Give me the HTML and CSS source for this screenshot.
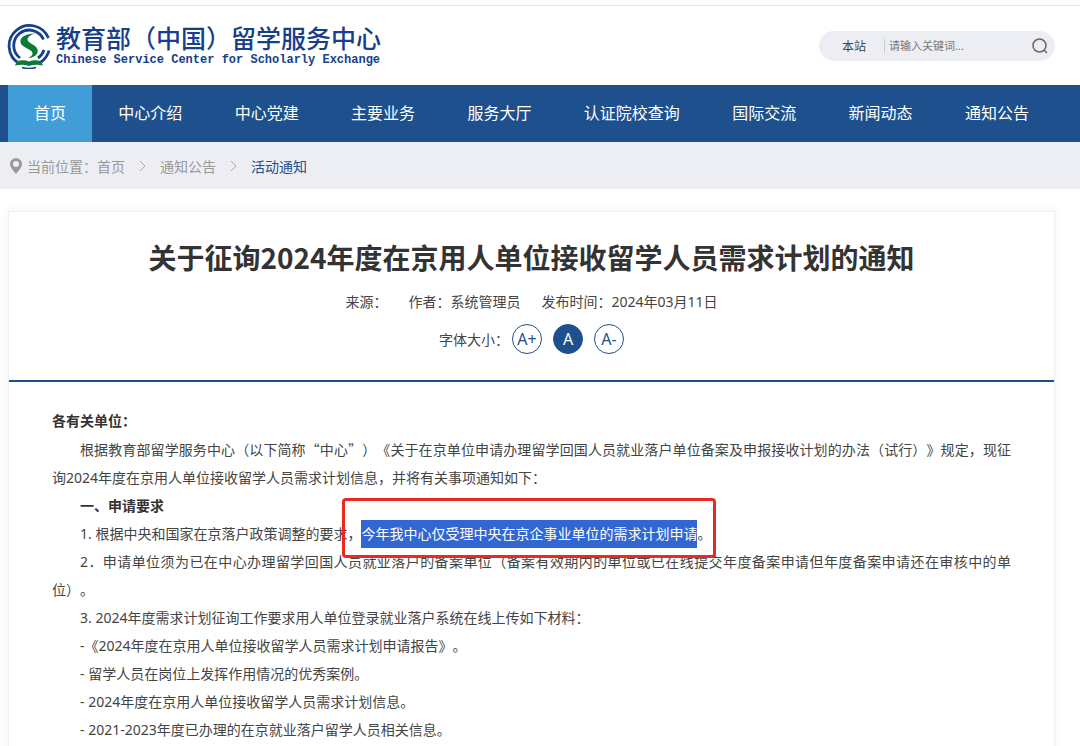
FILE: index.html
```html
<!DOCTYPE html>
<html lang="zh-CN">
<head>
    <meta charset="UTF-8">
    <meta name="viewport" content="width=device-width, initial-scale=1.0">
    <title>教育部（中国）留学服务中心</title>
    <link rel="stylesheet" href="styles.css">
</head>
<body>
    <header class="header">
        <a class="logo" href="#">
            <svg class="logo-mark" viewBox="0 0 44 46" aria-hidden="true">
                <g fill="none" stroke="#17408b">
                    <path d="M41.500 15A20.500 20.500 0 1 0 12 40.500" stroke-width="2.800"/>
                    <path d="M36.500 16.500A15.500 15.500 0 1 0 13 35" stroke-width="2.800"/>
                    <path d="M42 27.500A20.500 20.500 0 0 1 34 39" stroke-width="2.800"/>
                    <path d="M37 27A15.500 15.500 0 0 1 31 35" stroke-width="2.800"/>
                    <path d="M15 44.500q7 2 14 0" stroke-width="1.500"/>
                </g>
                <path fill="#0b7a35" d="M28 10.500C19 10.500 12.500 14 13.500 19.500C14.500 24.500 25 26 25.500 30C25.800 32 24 33.500 21.500 35C28 34.500 31.500 31 30.500 26.500C29.500 21.500 20.500 20.500 20.500 16.500C20.500 14 24 11.500 28 10.500Z"/>
                <path fill="#0b7a35" d="M10 38Q17 36.500 22 38.500Q27 36.500 34 38L36 42.500Q28 41 22 43Q16 41 8 42.500Z"/>
            </svg>
            <span class="logo-text">
                <span class="logo-cn">教育部（中国）留学服务中心</span>
                <span class="logo-en">Chinese Service Center for Scholarly Exchange</span>
            </span>
        </a>
        <form class="search">
            <button class="search-scope" type="button">本站</button>
            <input class="search-input" type="text" placeholder="请输入关键词..." aria-label="请输入关键词">
            <button class="search-btn" type="submit" aria-label="搜索">
                <svg viewBox="0 0 16 16" fill="none" stroke="#666" stroke-width="1.500">
                    <circle cx="7.500" cy="7.500" r="6.500"/>
                    <path d="M12 12l3 3"/>
                </svg>
            </button>
        </form>
    </header>

    <nav class="nav">
        <ul class="nav-list">
            <li><a class="active" href="#">首页</a></li>
            <li><a href="#">中心介绍</a></li>
            <li><a href="#">中心党建</a></li>
            <li><a href="#">主要业务</a></li>
            <li><a href="#">服务大厅</a></li>
            <li><a href="#">认证院校查询</a></li>
            <li><a href="#">国际交流</a></li>
            <li><a href="#">新闻动态</a></li>
            <li><a href="#">通知公告</a></li>
        </ul>
    </nav>

    <div class="crumbs">
        <svg class="pin" viewBox="0 0 12 16" aria-hidden="true">
            <path fill="#999" fill-rule="evenodd" d="M6 0a6 6 0 0 1 6 6c0 3.500-3 6-6 10C3 12 0 9.500 0 6a6 6 0 0 1 6-6zm0 3a3 3 0 1 0 0 6 3 3 0 0 0 0-6z"/>
        </svg>
        <span>当前位置：</span>
        <a href="#">首页</a>
        <svg class="arrow" viewBox="0 0 7 10" fill="none" stroke="#aaa"><path d="M1 0l5 5-5 5"/></svg>
        <a href="#">通知公告</a>
        <svg class="arrow" viewBox="0 0 7 10" fill="none" stroke="#aaa"><path d="M1 0l5 5-5 5"/></svg>
        <a class="current" href="#">活动通知</a>
    </div>

    <main class="article">
        <div class="article-head">
            <h1>关于征询2024年度在京用人单位接收留学人员需求计划的通知</h1>
            <div class="meta">
                <span>来源：</span>
                <span>作者：系统管理员</span>
                <span>发布时间：2024年03月11日</span>
            </div>
            <div class="font-size">
                <span>字体大小：</span>
                <button type="button">A+</button>
                <button class="on" type="button">A</button>
                <button type="button">A-</button>
            </div>
        </div>
        <div class="article-body">
            <p class="flush"><strong>各有关单位：</strong></p>
            <p>根据教育部留学服务中心（以下简称<span class="quote">“中心”</span>）《关于在京单位申请办理留学回国人员就业落户单位备案及申报接收计划的办法（试行）》规定，现征询2024年度在京用人单位接收留学人员需求计划信息，并将有关事项通知如下：</p>
            <p><strong>一、申请要求</strong></p>
            <p>1. 根据中央和国家在京落户政策调整的要求，<mark>今年我中心仅受理中央在京企事业单位的需求计划申请</mark>。</p>
            <p>2．申请单位须为已在中心办理留学回国人员就业落户的备案单位（备案有效期内的单位或已在线提交年度备案申请但年度备案申请还在审核中的单位）。</p>
            <p>3. 2024年度需求计划征询工作要求用人单位登录就业落户系统在线上传如下材料：</p>
            <p>-《2024年度在京用人单位接收留学人员需求计划申请报告》。</p>
            <p>- 留学人员在岗位上发挥作用情况的优秀案例。</p>
            <p>- 2024年度在京用人单位接收留学人员需求计划信息。</p>
            <p>- 2021-2023年度已办理的在京就业落户留学人员相关信息。</p>
        </div>
    </main>
</body>
</html>
```
FILE: styles.css
```css
* {
    box-sizing: border-box;
}
body {
    margin: 0;
    padding-top: 5px;
    font-family: "Noto Sans", "Noto Sans CJK SC", sans-serif;
    font-size: 14px;
    color: #444;
    background-color: #fff;
    text-spacing-trim: space-all;
}
a {
    color: inherit;
    text-decoration: none;
}
button, input {
    font-family: inherit;
    border: 0;
    padding: 0;
    background: none;
}
button {
    cursor: pointer;
}

.header {
    display: flex;
    justify-content: space-between;
    align-items: center;
    height: 80px;
    padding: 0 25px 0 7px;
    border-top: 1px solid #e6e6e6;
}
.logo {
    display: flex;
    align-items: center;
    gap: 5px;
    color: #17408b;
}
.logo-mark {
    width: 44px;
    height: 46px;
}
.logo-text {
    display: flex;
    flex-direction: column;
}
.logo-cn {
    font-size: 25px;
    font-weight: 500;
    line-height: 28px;
}
.logo-en {
    font-family: "Liberation Mono", monospace;
    font-size: 12px;
    font-weight: bold;
    line-height: 16px;
}
.search {
    display: flex;
    align-items: center;
    width: 236px;
    height: 30px;
    padding: 0 7px 0 23px;
    border-radius: 15px;
    background-color: #edeef3;
}
.search-scope {
    width: 42px;
    font-size: 12px;
    text-align: left;
    color: #444;
}
.search-input {
    flex: 1;
    min-width: 0;
    height: 14px;
    padding-left: 4px;
    border-left: 1px solid #ccc;
    font-size: 11px;
    outline: none;
}
.search-input::placeholder {
    color: #777;
}
.search-btn {
    width: 16px;
    height: 16px;
}
.search-btn svg {
    display: block;
}

.nav {
    background-color: #1d508d;
}
.nav-list {
    display: flex;
    justify-content: space-between;
    margin: 0;
    padding: 0 25px 0 8px;
    list-style: none;
}
.nav-list a {
    display: block;
    padding: 0 26px;
    font-size: 16px;
    line-height: 57px;
    color: #fff;
}
.nav-list a.active {
    background-color: #409dd7;
}

.crumbs {
    display: flex;
    align-items: center;
    height: 47px;
    padding-left: 10px;
    color: #999;
    background-color: #edeef3;
}
.pin {
    width: 12px;
    height: 16px;
    margin-right: 5px;
}
.arrow {
    width: 7px;
    height: 10px;
    margin: 0 14px;
}
.crumbs .current {
    color: #1d508d;
}

.article {
    margin: 22px 25px 0 8px;
    border: 1px solid #f0f0f0;
    box-shadow: 0 0 10px rgba(0, 0, 0, 0.06);
}
.article-head {
    display: flex;
    flex-direction: column;
    align-items: center;
    padding: 23px 0 26px;
    border-bottom: 2px solid #1d508d;
}
h1 {
    margin: 0;
    font-family: "Noto Sans CJK SC", sans-serif;
    font-size: 28px;
    line-height: 44px;
    color: #333;
}
.meta {
    display: flex;
    gap: 21px;
    line-height: 45px;
}
.font-size {
    display: flex;
    align-items: center;
    gap: 11px;
}
.font-size span {
    margin-right: -8px;
}
.font-size button {
    width: 30px;
    height: 30px;
    border: 1px solid #1d508d;
    border-radius: 50%;
    font-size: 16px;
    line-height: 28px;
    color: #1d508d;
}
.font-size button.on {
    color: #fff;
    background-color: #1d508d;
}

.article-body {
    padding: 25px 43px 40px;
    line-height: 28px;
}
.article-body p {
    margin: 0;
    text-indent: 2em;
    text-align: justify;
}
.article-body p.flush {
    text-indent: 0;
}
.article-body strong {
    color: #333;
}
.quote {
    font-family: "Noto Sans CJK SC", sans-serif;
}
mark {
    position: relative;
    display: inline-block;
    text-indent: 0;
    color: #fff;
    background-color: #3267d3;
}
mark::after {
    content: "";
    position: absolute;
    inset: -22px -19px -10px;
    border: 3px solid #ea2a22;
    border-radius: 4px;
}
```
